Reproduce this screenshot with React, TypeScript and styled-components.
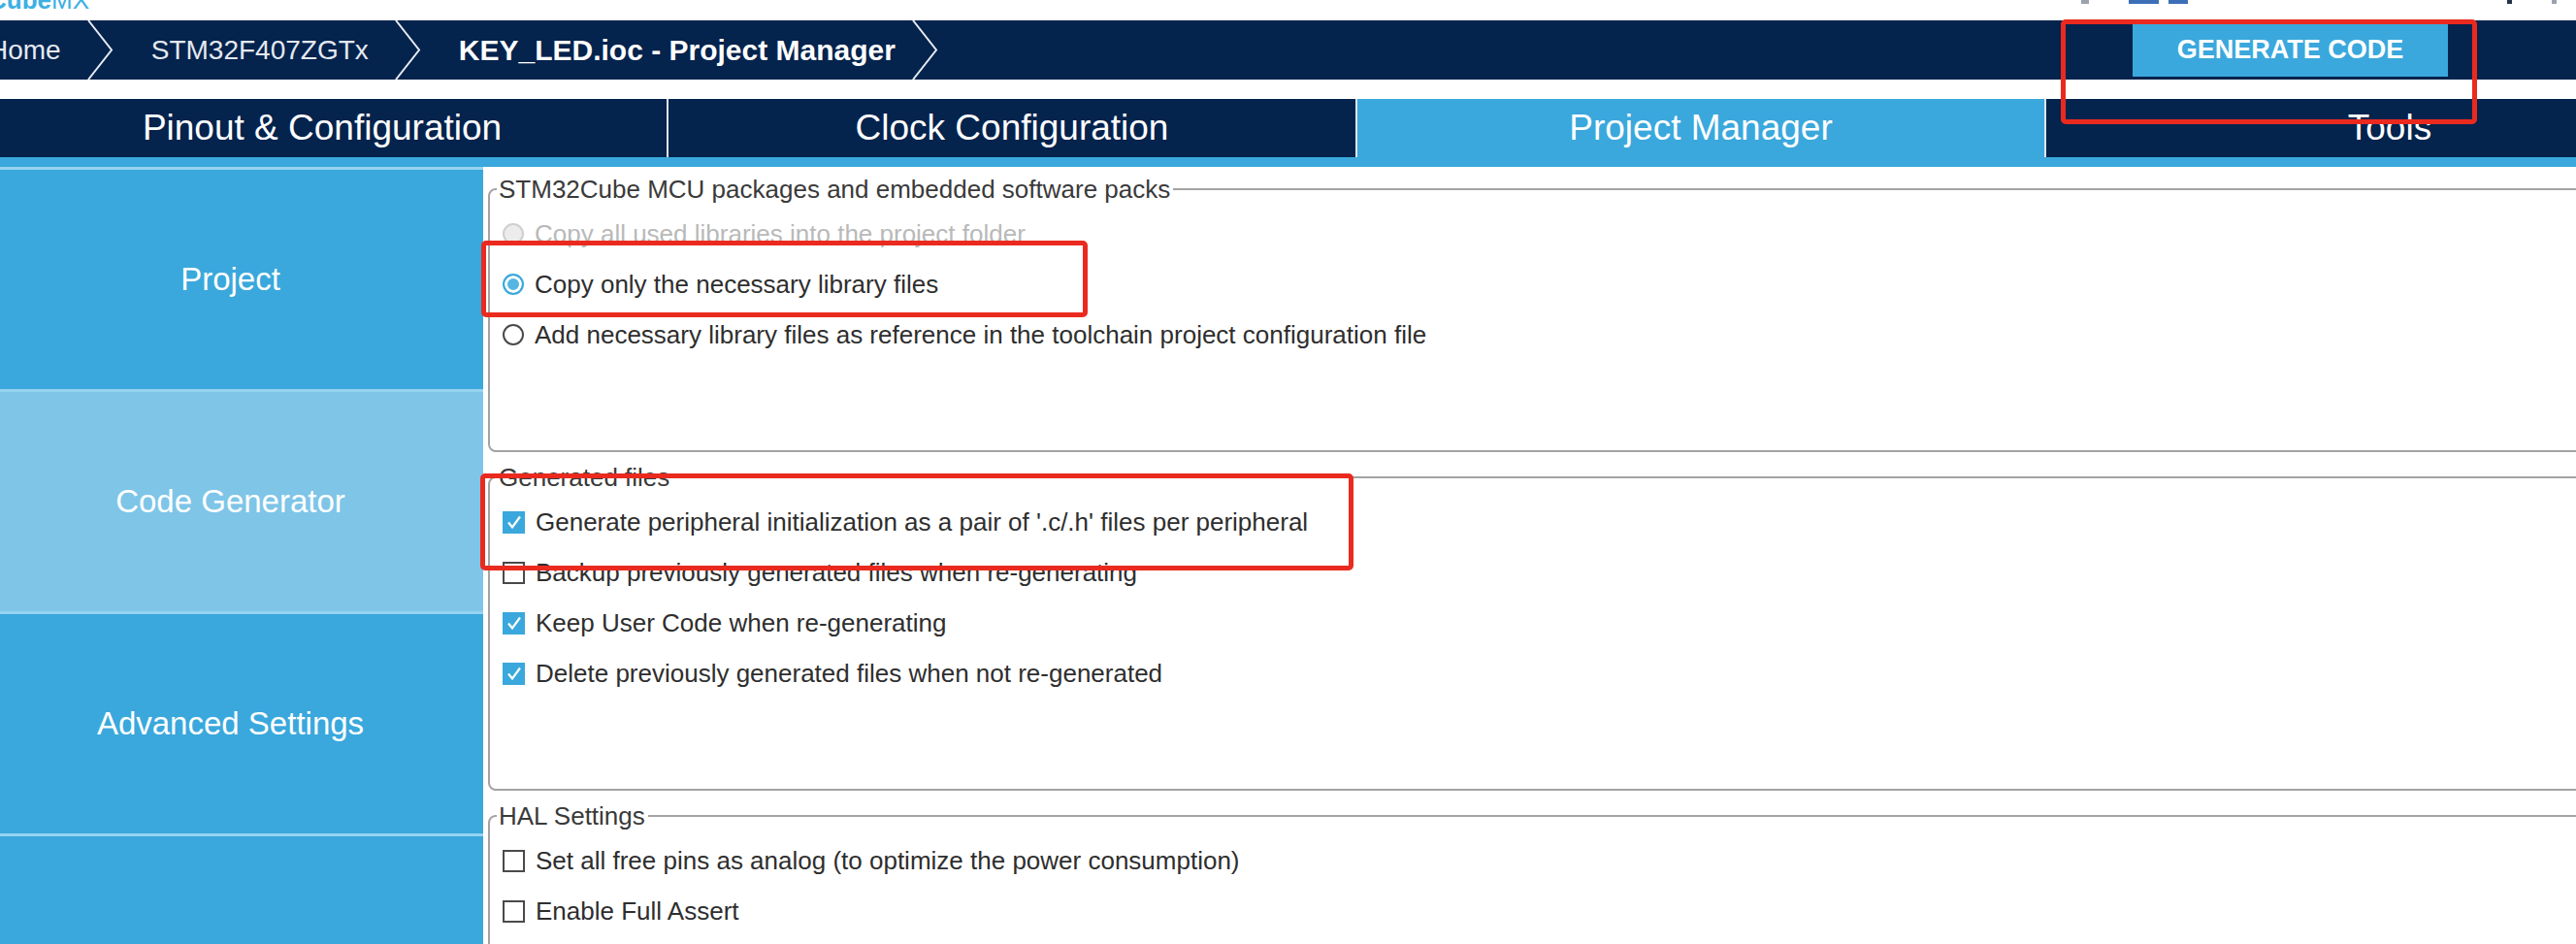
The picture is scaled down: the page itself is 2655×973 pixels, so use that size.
import { createGlobalStyle, styled } from "styled-components";

const navy = "#04234d";
const blue = "#3aa8dc";
const lightBlue = "#7ec5e8";
const paleBlue = "#96d3f0";

const GlobalStyle = createGlobalStyle`
  body {
    margin: 0;
    overflow: hidden;
    background: #ffffff;
    font-family: "Liberation Sans", Arial, sans-serif;
  }
`;

interface RowItem {
  label: string;
  state: "on" | "off" | "disabled";
}

const packOptions: RowItem[] = [
  { label: "Copy all used libraries into the project folder", state: "disabled" },
  { label: "Copy only the necessary library files", state: "on" },
  { label: "Add necessary library files as reference in the toolchain project configuration file", state: "off" },
];

const generatedFiles: RowItem[] = [
  { label: "Generate peripheral initialization as a pair of '.c/.h' files per peripheral", state: "on" },
  { label: "Backup previously generated files when re-generating", state: "off" },
  { label: "Keep User Code when re-generating", state: "on" },
  { label: "Delete previously generated files when not re-generated", state: "on" },
];

const halSettings: RowItem[] = [
  { label: "Set all free pins as analog (to optimize the power consumption)", state: "off" },
  { label: "Enable Full Assert", state: "off" },
];

const tabs = ["Pinout & Configuration", "Clock Configuration", "Project Manager", "Tools"];
const sideItems = ["Project", "Code Generator", "Advanced Settings", ""];

const crumbs = [
  { label: "Home", bold: false },
  { label: "STM32F407ZGTx", bold: false },
  { label: "KEY_LED.ioc - Project Manager", bold: true },
];

const Chevron = () => (
  <svg width="28" height="61" viewBox="0 0 28 61">
    <polyline points="2,0 26,30.5 2,61" fill="none" stroke="#e6ebf2" strokeWidth="2" />
  </svg>
);

const CheckMark = () => (
  <svg width="22" height="22" viewBox="0 0 22 22">
    <path d="M5 11.5 L9 16.5 L17 5.5" fill="none" stroke="#ffffff" strokeWidth="2.2" />
  </svg>
);

export default function App() {
  return (
    <Root>
      <GlobalStyle />
      <Window>
        <TopStrip>
          <Logo>
            <b>Cube</b>MX
          </Logo>
          <Stubs>
            <Stub $w={8} $color="#9aa3ad" $gap={0} />
            <Stub $w={31} $color="#3d6fb8" $gap={41} />
            <Stub $w={20} $color="#3d6fb8" $gap={10} />
            <Stub $w={5} $color="#24324a" $gap={329} />
            <Stub $w={5} $color="#9aa3ad" $gap={41} />
          </Stubs>
        </TopStrip>

        <Breadcrumbs>
          {crumbs.map((c) => (
            <Crumb key={c.label}>
              <CrumbText $bold={c.bold}>{c.label}</CrumbText>
              <ChevronBox $tight={c.bold}>
                <Chevron />
              </ChevronBox>
            </Crumb>
          ))}
          <GenerateButton>GENERATE CODE</GenerateButton>
        </Breadcrumbs>

        <TabBar>
          {tabs.map((t, i) => (
            <Tab key={t} $active={t === "Project Manager"} $first={i === 0}>
              {t}
            </Tab>
          ))}
        </TabBar>
        <TabUnderline />

        <Main>
          <Sidebar>
            {sideItems.map((s) => (
              <SideItem key={s || "empty"} $selected={s === "Code Generator"}>
                {s}
              </SideItem>
            ))}
          </Sidebar>

          <Content>
            <Group $height={286}>
              <Legend>STM32Cube MCU packages and embedded software packs</Legend>
              {packOptions.map((o) => (
                <Row key={o.label}>
                  <Radio $state={o.state} />
                  <RowLabel $disabled={o.state === "disabled"}>{o.label}</RowLabel>
                </Row>
              ))}
            </Group>

            <Group $height={338}>
              <Legend>Generated files</Legend>
              {generatedFiles.map((o) => (
                <Row key={o.label}>
                  <Checkbox $checked={o.state === "on"}>{o.state === "on" && <CheckMark />}</Checkbox>
                  <RowLabel>{o.label}</RowLabel>
                </Row>
              ))}
            </Group>

            <Group $height={300}>
              <Legend>HAL Settings</Legend>
              {halSettings.map((o) => (
                <Row key={o.label}>
                  <Checkbox $checked={o.state === "on"}>{o.state === "on" && <CheckMark />}</Checkbox>
                  <RowLabel>{o.label}</RowLabel>
                </Row>
              ))}
            </Group>
          </Content>
        </Main>
      </Window>

      {/* red annotation frames drawn over the screenshot */}
      <Annotation style={{ left: 2124, top: 20, width: 429, height: 108 }} />
      <Annotation style={{ left: 496, top: 248, width: 625, height: 79 }} />
      <Annotation style={{ left: 495, top: 488, width: 900, height: 100 }} />
    </Root>
  );
}

const Root = styled.div`
  position: relative;
  width: 2655px;
  height: 973px;
  overflow: hidden;
  background: #ffffff;
`;

const Window = styled.div`
  margin-left: -23px;
  width: 2678px;
  height: 973px;
  display: flex;
  flex-direction: column;
`;

const TopStrip = styled.div`
  height: 21px;
  display: flex;
  overflow: hidden;
`;

const Logo = styled.span`
  margin-left: 11px;
  margin-top: -13px;
  font-size: 26px;
  line-height: 26px;
  color: #3db0e3;
  white-space: nowrap;

  b {
    font-weight: bold;
  }
`;

const Stubs = styled.div`
  margin-left: auto;
  margin-right: 20px;
  display: flex;
  align-items: flex-start;
`;

const Stub = styled.span<{ $w: number; $color: string; $gap: number }>`
  width: ${(p) => p.$w}px;
  height: 4px;
  margin-left: ${(p) => p.$gap}px;
  background: ${(p) => p.$color};
`;

const Breadcrumbs = styled.div`
  height: 61px;
  background: ${navy};
  display: flex;
  align-items: center;
  padding-left: 11px;
`;

const Crumb = styled.div`
  display: flex;
  align-items: center;
  height: 100%;
`;

const CrumbText = styled.span<{ $bold: boolean }>`
  font-size: ${(p) => (p.$bold ? 30 : 28)}px;
  font-weight: ${(p) => (p.$bold ? "bold" : "normal")};
  color: ${(p) => (p.$bold ? "#ffffff" : "#e4e9f0")};
  white-space: nowrap;
`;

const ChevronBox = styled.span<{ $tight: boolean }>`
  display: flex;
  height: 61px;
  margin: 0 39px 0 ${(p) => (p.$tight ? 16 : 26)}px;
`;

const GenerateButton = styled.div`
  margin-left: auto;
  margin-right: 132px;
  width: 325px;
  height: 55px;
  background: ${blue};
  color: #ffffff;
  font-size: 27px;
  font-weight: bold;
  display: flex;
  align-items: center;
  justify-content: center;
`;

const TabBar = styled.div`
  margin-top: 20px;
  height: 60px;
  background: ${navy};
  display: flex;
  overflow: hidden;
`;

const Tab = styled.div<{ $active: boolean; $first: boolean }>`
  flex-shrink: 0;
  width: 710px;
  box-sizing: border-box;
  border-left: ${(p) => (p.$first ? "none" : "2px solid #dfe5ee")};
  background: ${(p) => (p.$active ? blue : navy)};
  color: #ffffff;
  font-size: 37px;
  display: flex;
  align-items: center;
  justify-content: center;
`;

const TabUnderline = styled.div`
  height: 10px;
  background: ${blue};
`;

const Main = styled.div`
  flex: 1;
  display: flex;
  min-height: 0;
`;

const Sidebar = styled.div`
  width: 521px;
  flex-shrink: 0;
  background: ${blue};
  display: flex;
  flex-direction: column;
`;

const SideItem = styled.div<{ $selected: boolean }>`
  height: 229px;
  flex-shrink: 0;
  box-sizing: border-box;
  border-top: 3px solid ${paleBlue};
  background: ${(p) => (p.$selected ? lightBlue : blue)};
  color: #ffffff;
  font-size: 33px;
  display: flex;
  align-items: center;
  justify-content: center;
`;

const Content = styled.div`
  flex: 1;
  padding: 8px 0 0 5px;
  display: flex;
  flex-direction: column;
  gap: 11px;
  overflow: hidden;
`;

const Group = styled.fieldset<{ $height: number }>`
  margin: 0 -60px 0 0;
  padding: 5px 0 0 13px;
  box-sizing: border-box;
  border: 2px solid #a3a3a3;
  border-radius: 8px;
  min-inline-size: 0;
  height: ${(p) => p.$height}px;
  flex-shrink: 0;
  display: block;
`;

const Legend = styled.legend`
  margin-left: -6px;
  padding: 0 3px 0 2px;
  font-size: 26px;
  line-height: 30px;
  color: #3a3a3a;
`;

const Row = styled.div`
  height: 52px;
  display: flex;
  align-items: center;
  gap: 11px;
`;

const RowLabel = styled.span<{ $disabled?: boolean }>`
  font-size: 26px;
  color: ${(p) => (p.$disabled ? "#b9b9b9" : "#2e2e2e")};
  white-space: nowrap;
`;

const Radio = styled.span<{ $state: "on" | "off" | "disabled" }>`
  width: 22px;
  height: 22px;
  box-sizing: border-box;
  border-radius: 50%;
  flex-shrink: 0;
  border: 2px solid
    ${(p) => (p.$state === "on" ? blue : p.$state === "disabled" ? "#cfcfcf" : "#4a4a4a")};
  background: ${(p) => (p.$state === "on" ? "#55b5e2" : p.$state === "disabled" ? "#ececec" : "#ffffff")};
  box-shadow: ${(p) => (p.$state === "on" ? "inset 0 0 0 3px #ffffff" : "none")};
`;

const Checkbox = styled.span<{ $checked: boolean }>`
  width: 23px;
  height: 23px;
  box-sizing: border-box;
  flex-shrink: 0;
  display: flex;
  align-items: center;
  justify-content: center;
  background: ${(p) => (p.$checked ? blue : "#ffffff")};
  border: ${(p) => (p.$checked ? "none" : "2px solid #4a4a4a")};
`;

const Annotation = styled.div`
  position: absolute;
  box-sizing: border-box;
  border: 5px solid #ea2a1f;
  border-radius: 5px;
  pointer-events: none;
`;
